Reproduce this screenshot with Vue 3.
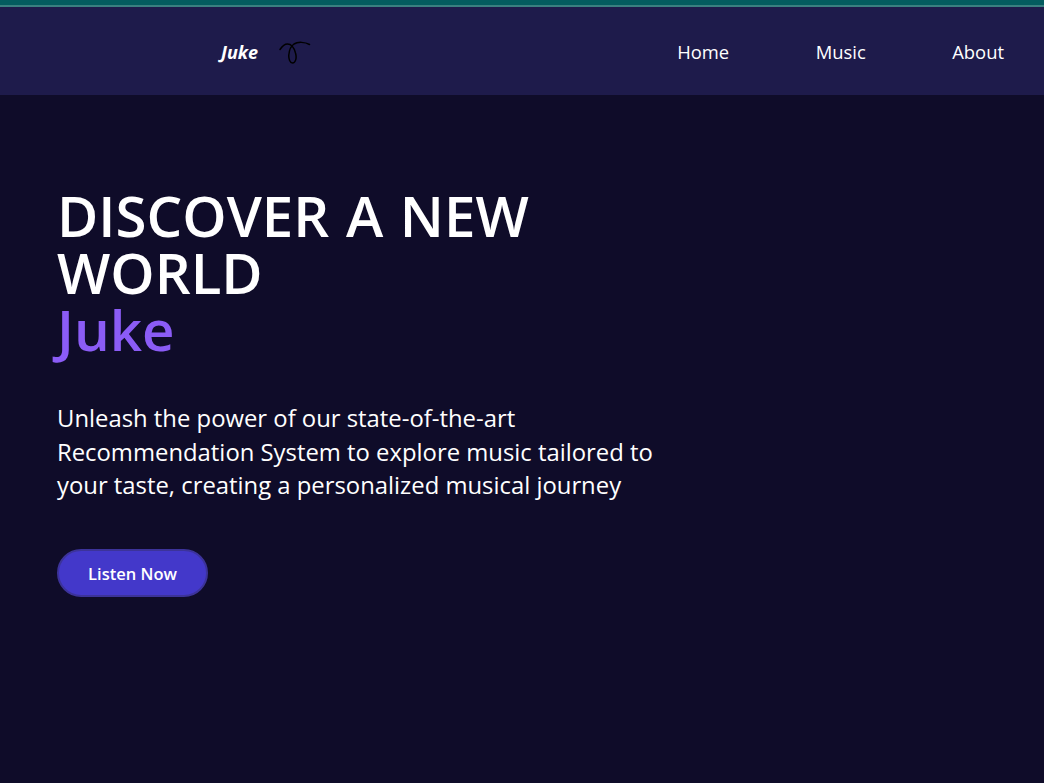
<script setup>
const links = ['Home', 'Music', 'About']
</script>

<template>
  <div class="page">
    <div class="topband"></div>
    <nav class="nav">
      <div class="brand">
        <span class="brand-name">Juke</span>
        <svg class="logo" width="32" height="24" viewBox="0 0 32 24" fill="none">
          <path d="M1 9.5C3 6.5 6 4 8.5 4C12 4 15 7.5 16.5 13C18 18 16.5 23 13.5 23C11 23 9.5 19 9.8 15C10.2 10 12 6 15 4C19 1.5 26 2 30.5 4.5" stroke="#000" stroke-width="1.5" stroke-linecap="round"/>
        </svg>
      </div>
      <ul class="links">
        <li v-for="l in links" :key="l">{{ l }}</li>
      </ul>
    </nav>
    <main class="hero">
      <h1 class="title">DISCOVER A NEW WORLD<span class="accent">Juke</span></h1>
      <p class="lead">Unleash the power of our state-of-the-art Recommendation System to explore music tailored to your taste, creating a personalized musical journey</p>
      <button class="cta">Listen Now</button>
    </main>
  </div>
</template>

<style>
html, body { margin: 0; background: #0f0c29; }
</style>

<style scoped>
.page {
  min-height: 783px;
  background: #0f0c29;
  font-family: "Open Sans", "Noto Sans", sans-serif;
  color: #fff;
  display: flex;
  flex-direction: column;
}
.topband {
  height: 5px;
  background: #045c5f;
  border-bottom: 2px solid #3a8080;
}
.nav {
  height: 88px;
  background: #1e1b4b;
  display: flex;
  align-items: center;
  justify-content: space-between;
  padding-left: 221px;
  padding-right: 40px;
}
.brand {
  display: flex;
  align-items: center;
  gap: 21px;
  padding-top: 1px;
}
.brand-name {
  font-size: 18px;
  font-weight: 700;
  font-style: italic;
}
.logo {
  display: block;
}
.links {
  display: flex;
  gap: 86.5px;
  list-style: none;
  margin: 0;
  padding: 0;
  font-size: 18.4px;
  line-height: 27px;
}
.hero {
  padding: 92px 0 0 57px;
  width: 610px;
}
.title {
  margin: 0;
  font-size: 56.4px;
  line-height: 57px;
  font-weight: 600;
  word-spacing: 2px;
}
.accent {
  display: block;
  color: #8b5cf6;
}
.lead {
  margin: 44px 0 0;
  font-size: 23.85px;
  line-height: 33.5px;
}
.cta {
  margin-top: 46px;
  width: 151px;
  height: 48px;
  padding: 2px 0 0;
  border-radius: 24px;
  border: 2px solid #3c339a;
  background: #4338ca;
  color: #fff;
  font-family: inherit;
  font-size: 16.5px;
  font-weight: 600;
}
</style>
